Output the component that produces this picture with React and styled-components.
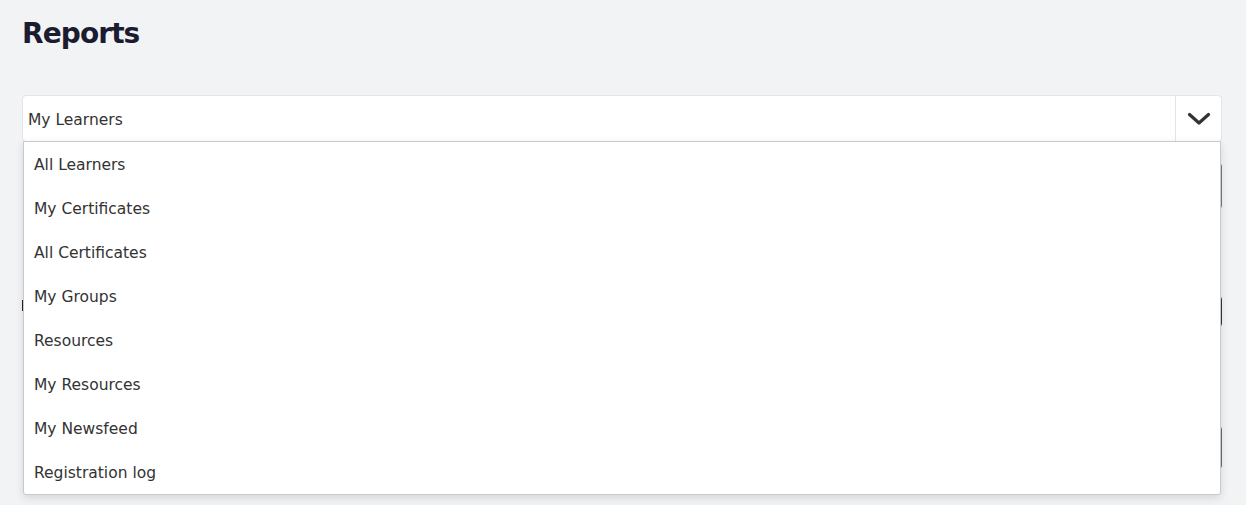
import React from "react";
import styled, { createGlobalStyle } from "styled-components";

const Global = createGlobalStyle`
  html, body { margin: 0; padding: 0; background: #f2f3f5; }
  body { font-family: "DejaVu Sans", "Liberation Sans", sans-serif; color: #333; }
  * { box-sizing: border-box; }
`;

const Page = styled.div`
  padding: 14px 24px 0 22px;
  width: 1246px;
  height: 505px;
  overflow: hidden;
`;

const Title = styled.h1`
  margin: 0;
  font-size: 28px;
  line-height: 40px;
  font-weight: 700;
  color: #1c1c30;
  letter-spacing: -0.9px;
`;

const SelectWrap = styled.div`
  position: relative;
  margin-top: 41px;
  width: 1200px;
`;

const SelectBox = styled.div`
  display: flex;
  align-items: stretch;
  height: 47px;
  background: #fff;
  border: 1px solid #e3e4e7;
  border-radius: 4px;
`;

const SelectValue = styled.div`
  flex: 1;
  display: flex;
  align-items: center;
  padding: 2px 0 0 5px;
  font-size: 15.5px;
  color: #333;
`;

const Indicator = styled.div`
  width: 46px;
  display: flex;
  align-items: center;
  justify-content: center;
  border-left: 1px solid #e3e4e7;
`;

const Menu = styled.ul`
  position: absolute;
  top: 46px;
  left: 1px;
  width: 1198px;
  margin: 0;
  padding: 0;
  list-style: none;
  background: #fff;
  border: 1px solid #c9cacd;
  border-radius: 0 0 3px 3px;
  box-shadow: 0 3px 8px rgba(0, 0, 0, 0.12);
  z-index: 10;
`;

const Item = styled.li`
  height: 44px;
  display: flex;
  align-items: center;
  padding: 2px 0 0 10px;
  font-size: 15.5px;
  color: #333;
`;

const Hidden = styled.div`
  display: flex;
  flex-direction: column;
`;

const HiddenRow = styled.div`
  display: flex;
  justify-content: space-between;
  align-items: flex-start;
  height: ${(p) => p.$h}px;
  padding-top: ${(p) => p.$pt}px;
`;

const HiddenMark = styled.span`
  display: block;
  width: ${(p) => (p.$show ? 2 : 0)}px;
  height: 11px;
  margin-top: 4px;
  background: #222;
`;

const HiddenBox = styled.div`
  width: 160px;
  height: ${(p) => p.$h}px;
  border: 2px solid ${(p) => p.$c};
  border-radius: 4px;
  background: #fff;
`;

const items = [
  "All Learners",
  "My Certificates",
  "All Certificates",
  "My Groups",
  "Resources",
  "My Resources",
  "My Newsfeed",
  "Registration log",
];

function Chevron() {
  return (
    <svg width="24" height="14" viewBox="0 0 24 14" fill="none">
      <path
        d="M2.5 2.5 L12 11 L21.5 2.5"
        stroke="#333"
        strokeWidth="3.2"
        strokeLinecap="round"
        strokeLinejoin="round"
      />
    </svg>
  );
}

export default function App() {
  return (
    <>
      <Global />
      <Page>
        <Title>Reports</Title>
        <SelectWrap>
          <SelectBox>
            <SelectValue>My Learners</SelectValue>
            <Indicator>
              <Chevron />
            </Indicator>
          </SelectBox>
          <Menu>
            {items.map((t) => (
              <Item key={t}>{t}</Item>
            ))}
          </Menu>
          <Hidden>
            <HiddenRow $h={130} $pt={21}>
              <HiddenMark />
              <HiddenBox $h={46} $c="#7a7a80" />
            </HiddenRow>
            <HiddenRow $h={130} $pt={24}>
              <HiddenMark $show />
              <HiddenBox $h={31} $c="#34344a" />
            </HiddenRow>
            <HiddenRow $h={80} $pt={24}>
              <HiddenMark />
              <HiddenBox $h={43} $c="#6a6a70" />
            </HiddenRow>
          </Hidden>
        </SelectWrap>
      </Page>
    </>
  );
}
